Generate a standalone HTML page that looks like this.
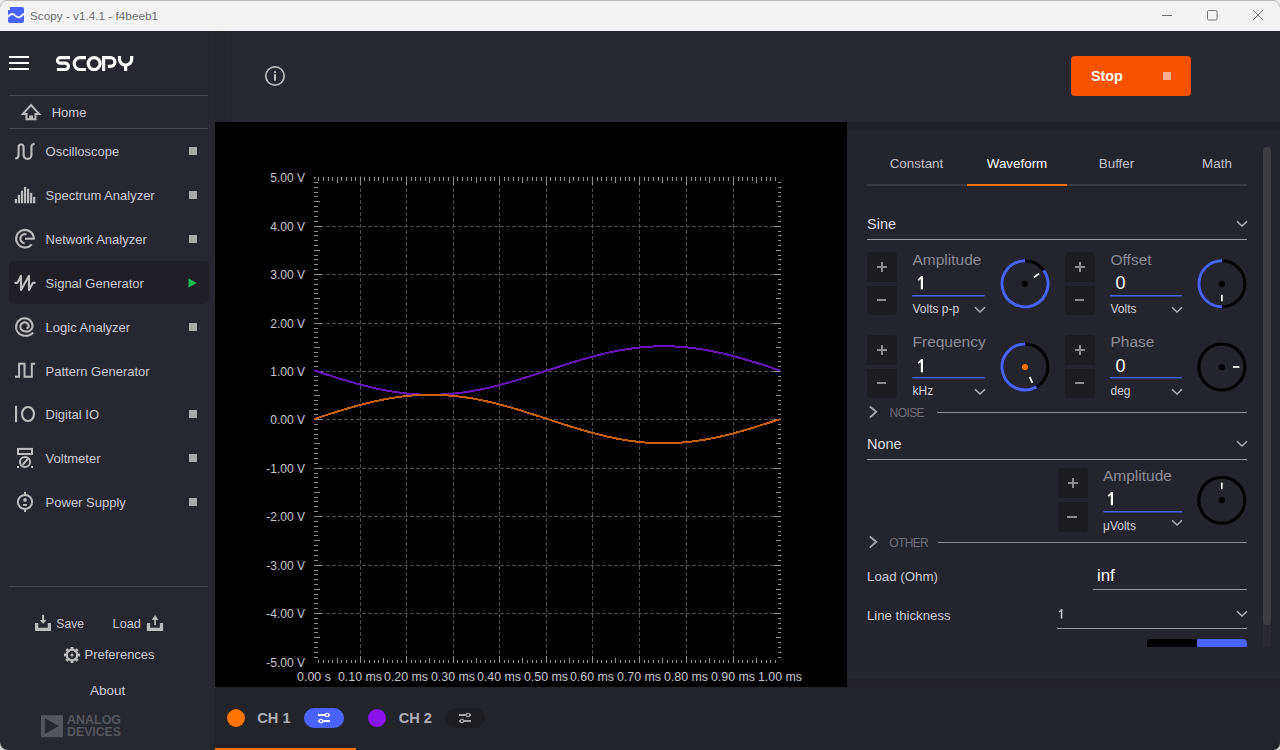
<!DOCTYPE html>
<html><head><meta charset="utf-8">
<style>
*{margin:0;padding:0;box-sizing:border-box}
html,body{width:1280px;height:750px;overflow:hidden;background:#272730;font-family:"Liberation Sans",sans-serif}
.a{position:absolute;white-space:nowrap}
svg.a{overflow:visible}
</style></head><body>
<div class="a" style="left:0px;top:0px;width:1280px;height:31px;background:#f3f3f3;"></div>
<div class="a" style="left:0px;top:0px;width:1280px;height:1px;background:#b9b9b9;"></div>
<svg class="a" style="left:8px;top:7px;" width="16" height="16" viewBox="0 0 16 16"><rect x="0" y="0" width="16" height="16" rx="2" fill="#4a62f7"/><path d="M0 9.8 C1.8 7.6 3.6 6.4 5.5 7.4 C7.2 8.3 8.8 10.6 11 10.4 C13 10.2 14.5 8 16 6.6" stroke="#fff" stroke-width="1.9" fill="none"/></svg>
<div class="a" style="left:30.00px;top:9.23px;width:400px;font-size:11.75px;line-height:14px;color:#6c6c6c;font-weight:400;text-align:left;">Scopy - v1.4.1 - f4beeb1</div>
<div class="a" style="left:1162px;top:15px;width:10px;height:1px;background:#6f6f6f;"></div>
<svg class="a" style="left:1206px;top:10px;" width="12" height="12" viewBox="0 0 12 12"><rect x="1.5" y="0.5" width="9.5" height="9.5" rx="1.2" stroke="#6f6f6f" stroke-width="1" fill="none"/></svg>
<svg class="a" style="left:1252px;top:9px;" width="12" height="12" viewBox="0 0 12 12"><path d="M1 1 L11 11 M11 1 L1 11" stroke="#6f6f6f" stroke-width="1" fill="none"/></svg>
<div class="a" style="left:0px;top:31px;width:215px;height:719px;background:#272730;"></div>
<div class="a" style="left:9px;top:56px;width:20px;height:2px;background:#ffffff;"></div>
<div class="a" style="left:9px;top:62px;width:20px;height:2px;background:#ffffff;"></div>
<div class="a" style="left:9px;top:68px;width:20px;height:2px;background:#ffffff;"></div>
<svg class="a" style="left:54px;top:52px;" width="82" height="23" viewBox="0 0 82 23"><g fill="none" stroke="#fff" stroke-width="3.2" stroke-linecap="butt"><path d="M16 5.6 H6.3 A2.8 2.8 0 0 0 6.3 11.2 H11.3 A3.15 3.15 0 0 1 11.3 17.5 H2.9"/><path d="M32 5.6 H26.15 A5.95 5.95 0 0 0 26.15 17.5 H32"/><circle cx="40.1" cy="11.55" r="5.95"/><path d="M49.6 19.1 V5.6 H56.5 A4.4 4.4 0 0 1 56.5 14.4 H53.8"/><path d="M65.5 4 V7 A6.1 6.1 0 0 0 77.7 7 V4 M71.6 13 V19.1"/></g></svg>
<div class="a" style="left:9px;top:95px;width:199px;height:1px;background:#45454d;"></div>
<div class="a" style="left:9px;top:128px;width:199px;height:1px;background:#45454d;"></div>
<svg class="a" style="left:20px;top:102px;" width="24" height="20" viewBox="0 0 24 20"><path d="M11 3.1 L2.9 11.9 H6.5 V17.2 H15.5 V11.9 H19.1 Z" fill="none" stroke="#bdbdbd" stroke-width="2" stroke-linejoin="miter" stroke-miterlimit="3"/><rect x="9.2" y="13.4" width="3.8" height="4" fill="#bdbdbd"/></svg>
<div class="a" style="left:51.70px;top:104.80px;width:400px;font-size:13px;line-height:16px;color:#c9cad0;font-weight:400;text-align:left;">Home</div>
<div class="a" style="left:9px;top:261px;width:200px;height:43px;background:#1f1f25;border-radius:5px;"></div>
<div class="a" style="left:45.60px;top:143.80px;width:400px;font-size:13px;line-height:16px;color:#c9cad0;font-weight:400;text-align:left;">Oscilloscope</div>
<div class="a" style="left:189px;top:147px;width:8px;height:8px;background:#a9a9a9;"></div>
<div class="a" style="left:45.60px;top:187.80px;width:400px;font-size:13px;line-height:16px;color:#c9cad0;font-weight:400;text-align:left;">Spectrum Analyzer</div>
<div class="a" style="left:189px;top:191px;width:8px;height:8px;background:#a9a9a9;"></div>
<div class="a" style="left:45.60px;top:231.80px;width:400px;font-size:13px;line-height:16px;color:#c9cad0;font-weight:400;text-align:left;">Network Analyzer</div>
<div class="a" style="left:189px;top:235px;width:8px;height:8px;background:#a9a9a9;"></div>
<div class="a" style="left:45.60px;top:275.80px;width:400px;font-size:13px;line-height:16px;color:#c9cad0;font-weight:400;text-align:left;">Signal Generator</div>
<svg class="a" style="left:188px;top:278px;" width="10" height="10" viewBox="0 0 10 10"><path d="M0.5 0.5 L9 5 L0.5 9.5 Z" fill="#1db954"/></svg>
<div class="a" style="left:45.60px;top:319.80px;width:400px;font-size:13px;line-height:16px;color:#c9cad0;font-weight:400;text-align:left;">Logic Analyzer</div>
<div class="a" style="left:189px;top:323px;width:8px;height:8px;background:#a9a9a9;"></div>
<div class="a" style="left:45.60px;top:363.80px;width:400px;font-size:13px;line-height:16px;color:#c9cad0;font-weight:400;text-align:left;">Pattern Generator</div>
<div class="a" style="left:45.60px;top:406.80px;width:400px;font-size:13px;line-height:16px;color:#c9cad0;font-weight:400;text-align:left;">Digital IO</div>
<div class="a" style="left:189px;top:410px;width:8px;height:8px;background:#a9a9a9;"></div>
<div class="a" style="left:45.60px;top:450.80px;width:400px;font-size:13px;line-height:16px;color:#c9cad0;font-weight:400;text-align:left;">Voltmeter</div>
<div class="a" style="left:189px;top:454px;width:8px;height:8px;background:#a9a9a9;"></div>
<div class="a" style="left:45.60px;top:494.80px;width:400px;font-size:13px;line-height:16px;color:#c9cad0;font-weight:400;text-align:left;">Power Supply</div>
<div class="a" style="left:189px;top:498px;width:8px;height:8px;background:#a9a9a9;"></div>
<svg class="a" style="left:10px;top:138px;" width="30" height="26" viewBox="0 0 30 26"><path d="M5.3 20.4 Q8.6 20.4 8.6 17 V9 A2.5 2.5 0 0 1 13.6 9 V17 A3.9 3.9 0 0 0 21.4 17 V9 Q21.4 6 24.6 6" fill="none" stroke="#bdbdbd" stroke-width="2.1"/></svg>
<svg class="a" style="left:10px;top:173px;" width="30" height="35" viewBox="0 0 30 35"><rect x="4.80" y="26.00" width="2.2" height="4.30" fill="#bdbdbd"/><rect x="7.85" y="21.80" width="2.2" height="8.50" fill="#bdbdbd"/><rect x="10.90" y="17.70" width="2.2" height="12.60" fill="#bdbdbd"/><rect x="13.95" y="13.90" width="2.2" height="16.40" fill="#bdbdbd"/><rect x="17.00" y="15.90" width="2.2" height="14.40" fill="#bdbdbd"/><rect x="20.05" y="19.80" width="2.2" height="10.50" fill="#bdbdbd"/><rect x="23.10" y="23.90" width="2.2" height="6.40" fill="#bdbdbd"/></svg>
<svg class="a" style="left:10px;top:226px;" width="30" height="26" viewBox="0 0 30 26"><g fill="none" stroke="#bdbdbd" stroke-width="2.1"><path d="M23.80 12.70 A8.8 8.8 0 1 0 21.74 18.36"/><path d="M15 12.7 H24.8"/><path d="M16.57 8.38 A4.6 4.6 0 1 0 14.60 17.28"/></g></svg>
<svg class="a" style="left:12px;top:272px;" width="26" height="24" viewBox="0 0 26 24"><path d="M3.3 10.9 H5.4 L9 3.8 V18 L17 3.8 V18 L20.8 10.9 H22.6" fill="none" stroke="#bdbdbd" stroke-width="2.1" stroke-linejoin="round" stroke-linecap="round"/></svg>
<svg class="a" style="left:10px;top:314px;" width="30" height="26" viewBox="0 0 30 26"><path d="M23.09 18.54 L22.80 18.85 L22.50 19.15 L22.19 19.43 L21.87 19.70 L21.53 19.95 L21.19 20.19 L20.84 20.41 L20.49 20.62 L20.12 20.81 L19.76 20.98 L19.38 21.14 L19.00 21.28 L18.62 21.40 L18.23 21.50 L17.85 21.59 L17.46 21.66 L17.07 21.71 L16.68 21.75 L16.29 21.77 L15.90 21.77 L15.52 21.76 L15.14 21.73 L14.76 21.70 L14.38 21.68 L14.00 21.65 L13.63 21.60 L13.26 21.53 L12.89 21.45 L12.53 21.35 L12.17 21.24 L11.81 21.11 L11.46 20.97 L11.12 20.81 L10.79 20.64 L10.46 20.46 L10.14 20.26 L9.83 20.05 L9.53 19.82 L9.24 19.58 L8.96 19.34 L8.69 19.07 L8.44 18.80 L8.19 18.52 L7.96 18.23 L7.74 17.93 L7.53 17.62 L7.33 17.30 L7.15 16.97 L6.99 16.64 L6.84 16.29 L6.70 15.95 L6.58 15.60 L6.47 15.24 L6.38 14.88 L6.30 14.51 L6.24 14.15 L6.19 13.78 L6.16 13.41 L6.15 13.04 L6.15 12.66 L6.17 12.29 L6.20 11.92 L6.25 11.56 L6.32 11.19 L6.40 10.83 L6.49 10.47 L6.60 10.12 L6.73 9.77 L6.87 9.43 L7.02 9.09 L7.19 8.76 L7.37 8.44 L7.57 8.13 L7.77 7.82 L7.99 7.53 L8.23 7.24 L8.47 6.97 L8.73 6.70 L9.00 6.45 L9.27 6.21 L9.56 5.98 L9.86 5.76 L10.16 5.56 L10.48 5.37 L10.80 5.19 L11.13 5.02 L11.46 4.88 L11.80 4.74 L12.15 4.62 L12.50 4.51 L12.85 4.42 L13.21 4.35 L13.57 4.29 L13.93 4.24 L14.30 4.21 L14.66 4.20 L15.03 4.21 L15.39 4.25 L15.75 4.31 L16.11 4.38 L16.46 4.46 L16.80 4.56 L17.14 4.68 L17.48 4.80 L17.81 4.95 L18.13 5.10 L18.44 5.27 L18.74 5.45 L19.04 5.64 L19.32 5.85 L19.60 6.06 L19.86 6.29 L20.12 6.53 L20.36 6.77 L20.59 7.03 L20.81 7.30 L21.02 7.57 L21.21 7.85 L21.40 8.14 L21.57 8.43 L21.72 8.73 L21.86 9.04 L21.99 9.35 L22.11 9.67 L22.21 9.98 L22.30 10.30 L22.37 10.63 L22.43 10.95 L22.48 11.28 L22.51 11.61 L22.52 11.93 L22.53 12.26 L22.51 12.58 L22.47 12.91 L22.37 13.22 L22.26 13.53 L22.14 13.83 L22.00 14.12 L21.86 14.40 L21.70 14.67 L21.53 14.93 L21.35 15.18 L21.17 15.42 L20.97 15.65 L20.77 15.86 L20.56 16.07 L20.34 16.26 L20.12 16.44 L19.89 16.60 L19.66 16.75 L19.42 16.89 L19.18 17.02 L18.94 17.14 L18.70 17.24 L18.45 17.33 L18.21 17.40 L17.96 17.47 L17.72 17.52 L17.47 17.56 L17.23 17.59 L16.99 17.60 L16.75 17.60 L16.52 17.60 L16.29 17.58 L16.07 17.55 L15.85 17.51 L15.63 17.46 L15.43 17.40 L15.22 17.33 L15.03 17.26 L14.84 17.20 L14.65 17.20 L14.47 17.18 L14.28 17.17 L14.10 17.14 L13.91 17.10 L13.73 17.06 L13.55 17.01 L13.37 16.95 L13.20 16.88 L13.02 16.81 L12.85 16.73 L12.69 16.64 L12.52 16.55 L12.37 16.44 L12.21 16.34 L12.06 16.22 L11.92 16.10 L11.78 15.97 L11.65 15.84 L11.52 15.70 L11.40 15.55 L11.28 15.40 L11.17 15.25 L11.07 15.09 L10.97 14.93 L10.88 14.76 L10.80 14.59 L10.72 14.41 L10.66 14.24 L10.60 14.06 L10.55 13.87 L10.50 13.69 L10.47 13.50 L10.44 13.31 L10.42 13.12 L10.40 12.93 L10.40 12.74 L10.41 12.55 L10.42 12.36 L10.44 12.17 L10.47 11.98 L10.51 11.80 L10.56 11.61 L10.61 11.43 L10.68 11.25 L10.75 11.07 L10.82 10.89 L10.91 10.72 L11.00 10.56 L11.10 10.39 L11.20 10.23 L11.32 10.08 L11.43 9.93 L11.56 9.78 L11.69 9.65 L11.83 9.51 L11.97 9.38 L12.12 9.26 L12.27 9.15 L12.43 9.04 L12.59 8.94 L12.75 8.84 L12.92 8.76 L13.10 8.68 L13.27 8.60 L13.45 8.54 L13.64 8.48 L13.82 8.43 L14.01 8.39 L14.19 8.36 L14.38 8.33 L14.57 8.31 L14.76 8.30 L14.96 8.31 L15.14 8.33 L15.33 8.37 L15.52 8.41 L15.70 8.47 L15.88 8.52 L16.05 8.59 L16.22 8.66 L16.39 8.74 L16.55 8.83 L16.71 8.92 L16.86 9.02 L17.01 9.13 L17.15 9.24 L17.29 9.36 L17.42 9.48 L17.54 9.60 L17.66 9.74 L17.78 9.87 L17.88 10.01 L17.98 10.15 L18.07 10.30 L18.16 10.45 L18.24 10.60 L18.31 10.76 L18.37 10.91 L18.43 11.07 L18.48 11.23 L18.53 11.39 L18.56 11.55 L18.59 11.72 L18.61 11.88 L18.63 12.04 L18.63 12.20 L18.63 12.37 L18.63 12.53 L18.61 12.69 L18.57 12.84 L18.48 12.99 L18.37 13.14 L18.26 13.27 L18.15 13.40 L18.03 13.51 L17.91 13.62 L17.78 13.72 L17.65 13.81 L17.52 13.89 L17.39 13.96 L17.26 14.02 L17.12 14.08 L16.99 14.12 L16.85 14.15 L16.72 14.18 L16.59 14.20 L16.46 14.21" fill="none" stroke="#bdbdbd" stroke-width="2.1"/></svg>
<svg class="a" style="left:10px;top:358px;" width="30" height="24" viewBox="0 0 30 24"><path d="M5 18.7 H9.1 V5.8 H14.5 V18.7 H21.8 V5.8 H25.2" fill="none" stroke="#bdbdbd" stroke-width="2"/></svg>
<svg class="a" style="left:12px;top:402px;" width="24" height="24" viewBox="0 0 24 24"><rect x="3" y="3.8" width="2.1" height="16.4" fill="#bdbdbd"/><ellipse cx="16" cy="12" rx="6" ry="7" fill="none" stroke="#bdbdbd" stroke-width="2.1"/></svg>
<svg class="a" style="left:12px;top:446px;" width="24" height="24" viewBox="0 0 24 24"><rect x="6" y="2.9" width="14" height="5.1" fill="none" stroke="#bdbdbd" stroke-width="2"/><circle cx="13" cy="16" r="5.1" fill="none" stroke="#bdbdbd" stroke-width="2"/><path d="M10.6 18.9 L16 12.6" stroke="#bdbdbd" stroke-width="2"/><rect x="5" y="20" width="2" height="2" fill="#bdbdbd"/><rect x="19" y="20" width="2" height="2" fill="#bdbdbd"/></svg>
<svg class="a" style="left:12px;top:490px;" width="24" height="24" viewBox="0 0 24 24"><circle cx="13" cy="12" r="7.1" fill="none" stroke="#bdbdbd" stroke-width="2"/><rect x="12" y="1.9" width="2" height="3" fill="#bdbdbd"/><rect x="12" y="19" width="2" height="3" fill="#bdbdbd"/><circle cx="13" cy="9.9" r="1.9" fill="#bdbdbd"/><rect x="11" y="14" width="4" height="1.8" fill="#bdbdbd"/></svg>
<div class="a" style="left:9px;top:586px;width:199px;height:1px;background:#45454d;"></div>
<svg class="a" style="left:34px;top:613px;" width="18" height="19" viewBox="0 0 18 19"><path d="M2.6 10 V16.4 H15.4 V10" fill="none" stroke="#bdbdbd" stroke-width="3.2"/><rect x="8.1" y="1.8" width="2" height="6" fill="#bdbdbd"/><path d="M5.8 7.1 L12.4 7.1 L9.1 11.1 Z" fill="#bdbdbd"/></svg>
<div class="a" style="left:56.30px;top:617.47px;width:400px;font-size:12.2px;line-height:15px;color:#c9cad0;font-weight:400;text-align:left;">Save</div>
<div class="a" style="left:112.60px;top:617.30px;width:400px;font-size:12.7px;line-height:15px;color:#c9cad0;font-weight:400;text-align:left;">Load</div>
<svg class="a" style="left:146px;top:613px;" width="18" height="19" viewBox="0 0 18 19"><path d="M2.5 10 V16.4 H15.5 V10" fill="none" stroke="#bdbdbd" stroke-width="3.2"/><rect x="8.2" y="6.5" width="1.7" height="5.5" fill="#bdbdbd"/><path d="M5.8 7.1 L12.4 7.1 L9.1 1.9 Z" fill="#bdbdbd"/></svg>
<svg class="a" style="left:64px;top:647px;" width="16" height="16" viewBox="0 0 16 16"><rect x="6.6" y="0" width="2.8" height="3.5" fill="#bdbdbd" transform="rotate(0 8 8)"/><rect x="6.6" y="0" width="2.8" height="3.5" fill="#bdbdbd" transform="rotate(45 8 8)"/><rect x="6.6" y="0" width="2.8" height="3.5" fill="#bdbdbd" transform="rotate(90 8 8)"/><rect x="6.6" y="0" width="2.8" height="3.5" fill="#bdbdbd" transform="rotate(135 8 8)"/><rect x="6.6" y="0" width="2.8" height="3.5" fill="#bdbdbd" transform="rotate(180 8 8)"/><rect x="6.6" y="0" width="2.8" height="3.5" fill="#bdbdbd" transform="rotate(225 8 8)"/><rect x="6.6" y="0" width="2.8" height="3.5" fill="#bdbdbd" transform="rotate(270 8 8)"/><rect x="6.6" y="0" width="2.8" height="3.5" fill="#bdbdbd" transform="rotate(315 8 8)"/><circle cx="8" cy="8" r="5.3" fill="none" stroke="#bdbdbd" stroke-width="2.2"/><circle cx="8" cy="8" r="1.5" fill="#bdbdbd"/></svg>
<div class="a" style="left:84.50px;top:647.20px;width:400px;font-size:13px;line-height:16px;color:#c9cad0;font-weight:400;text-align:left;">Preferences</div>
<div class="a" style="left:90.00px;top:683.32px;width:400px;font-size:13.5px;line-height:16px;color:#c9cad0;font-weight:400;text-align:left;">About</div>
<svg class="a" style="left:40px;top:714px;" width="84" height="24" viewBox="0 0 84 24"><rect x="1" y="1.2" width="22" height="22" fill="#55555c"/><path d="M4.8 4.3 L18.9 12 L4.8 19.9 Z" fill="#272730"/><g font-family="Liberation Sans" font-weight="700" font-size="13.6" fill="#55555c"><text x="27.1" y="10.4" textLength="53.9" lengthAdjust="spacingAndGlyphs">ANALOG</text><text x="27.1" y="22.2" textLength="53.9" lengthAdjust="spacingAndGlyphs">DEVICES</text></g></svg>
<div class="a" style="left:215px;top:31px;width:1065px;height:91px;background:#272730;"></div>
<div class="a" style="left:215px;top:31px;width:11px;height:91px;background:#25252c;"></div>
<svg class="a" style="left:264px;top:65px;" width="22" height="22" viewBox="0 0 22 22"><circle cx="11" cy="11" r="9.2" fill="none" stroke="#bdbdbd" stroke-width="1.7"/><rect x="10" y="9.2" width="2" height="6.5" fill="#bdbdbd"/><rect x="10" y="6.2" width="2" height="2" fill="#bdbdbd"/></svg>
<div class="a" style="left:1071px;top:56px;width:120px;height:40px;background:#f75200;border-radius:4px;"></div>
<div class="a" style="left:1090.90px;top:68.01px;width:400px;font-size:14.4px;line-height:17px;color:#ffffff;font-weight:700;text-align:left;">Stop</div>
<div class="a" style="left:1163px;top:72px;width:8px;height:8px;background:#f9b193;"></div>
<div class="a" style="left:215px;top:122px;width:632px;height:565px;background:#000;"></div>
<svg class="a" style="left:215px;top:122px;" width="632" height="565" viewBox="0 0 632 565"><g transform="translate(-215 -122)"><line x1="360.5" y1="176" x2="360.5" y2="663" stroke="#4b4b4b" stroke-width="1" stroke-dasharray="4 2"/><line x1="406.5" y1="176" x2="406.5" y2="663" stroke="#4b4b4b" stroke-width="1" stroke-dasharray="4 2"/><line x1="453.5" y1="176" x2="453.5" y2="663" stroke="#4b4b4b" stroke-width="1" stroke-dasharray="4 2"/><line x1="499.5" y1="176" x2="499.5" y2="663" stroke="#4b4b4b" stroke-width="1" stroke-dasharray="4 2"/><line x1="546.5" y1="176" x2="546.5" y2="663" stroke="#4b4b4b" stroke-width="1" stroke-dasharray="4 2"/><line x1="592.5" y1="176" x2="592.5" y2="663" stroke="#4b4b4b" stroke-width="1" stroke-dasharray="4 2"/><line x1="639.5" y1="176" x2="639.5" y2="663" stroke="#4b4b4b" stroke-width="1" stroke-dasharray="4 2"/><line x1="686.5" y1="176" x2="686.5" y2="663" stroke="#4b4b4b" stroke-width="1" stroke-dasharray="4 2"/><line x1="733.5" y1="176" x2="733.5" y2="663" stroke="#4b4b4b" stroke-width="1" stroke-dasharray="4 2"/><line x1="314" y1="226.5" x2="781" y2="226.5" stroke="#4b4b4b" stroke-width="1" stroke-dasharray="4 2"/><line x1="314" y1="274.5" x2="781" y2="274.5" stroke="#4b4b4b" stroke-width="1" stroke-dasharray="4 2"/><line x1="314" y1="323.5" x2="781" y2="323.5" stroke="#4b4b4b" stroke-width="1" stroke-dasharray="4 2"/><line x1="314" y1="371.5" x2="781" y2="371.5" stroke="#4b4b4b" stroke-width="1" stroke-dasharray="4 2"/><line x1="314" y1="419.5" x2="781" y2="419.5" stroke="#4b4b4b" stroke-width="1" stroke-dasharray="4 2"/><line x1="314" y1="468.5" x2="781" y2="468.5" stroke="#4b4b4b" stroke-width="1" stroke-dasharray="4 2"/><line x1="314" y1="516.5" x2="781" y2="516.5" stroke="#4b4b4b" stroke-width="1" stroke-dasharray="4 2"/><line x1="314" y1="565.5" x2="781" y2="565.5" stroke="#4b4b4b" stroke-width="1" stroke-dasharray="4 2"/><line x1="314" y1="613.5" x2="781" y2="613.5" stroke="#4b4b4b" stroke-width="1" stroke-dasharray="4 2"/><path d="M318.5 177V181M318.5 663V660M323.5 177V181M323.5 663V660M328.5 177V181M328.5 663V660M332.5 177V181M332.5 663V660M337.5 177V183M337.5 663V658M341.5 177V181M341.5 663V660M346.5 177V181M346.5 663V660M351.5 177V181M351.5 663V660M355.5 177V181M355.5 663V660M360.5 177V185M360.5 663V656M364.5 177V181M364.5 663V660M369.5 177V181M369.5 663V660M374.5 177V181M374.5 663V660M378.5 177V181M378.5 663V660M383.5 177V183M383.5 663V658M387.5 177V181M387.5 663V660M392.5 177V181M392.5 663V660M397.5 177V181M397.5 663V660M401.5 177V181M401.5 663V660M406.5 177V185M406.5 663V656M411.5 177V181M411.5 663V660M415.5 177V181M415.5 663V660M420.5 177V181M420.5 663V660M425.5 177V181M425.5 663V660M429.5 177V183M429.5 663V658M434.5 177V181M434.5 663V660M439.5 177V181M439.5 663V660M443.5 177V181M443.5 663V660M448.5 177V181M448.5 663V660M453.5 177V185M453.5 663V656M457.5 177V181M457.5 663V660M462.5 177V181M462.5 663V660M467.5 177V181M467.5 663V660M471.5 177V181M471.5 663V660M476.5 177V183M476.5 663V658M480.5 177V181M480.5 663V660M485.5 177V181M485.5 663V660M490.5 177V181M490.5 663V660M494.5 177V181M494.5 663V660M499.5 177V185M499.5 663V656M504.5 177V181M504.5 663V660M508.5 177V181M508.5 663V660M513.5 177V181M513.5 663V660M518.5 177V181M518.5 663V660M522.5 177V183M522.5 663V658M527.5 177V181M527.5 663V660M532.5 177V181M532.5 663V660M536.5 177V181M536.5 663V660M541.5 177V181M541.5 663V660M546.5 177V185M546.5 663V656M550.5 177V181M550.5 663V660M555.5 177V181M555.5 663V660M560.5 177V181M560.5 663V660M564.5 177V181M564.5 663V660M569.5 177V183M569.5 663V658M573.5 177V181M573.5 663V660M578.5 177V181M578.5 663V660M583.5 177V181M583.5 663V660M587.5 177V181M587.5 663V660M592.5 177V185M592.5 663V656M597.5 177V181M597.5 663V660M601.5 177V181M601.5 663V660M606.5 177V181M606.5 663V660M611.5 177V181M611.5 663V660M615.5 177V183M615.5 663V658M620.5 177V181M620.5 663V660M625.5 177V181M625.5 663V660M629.5 177V181M629.5 663V660M634.5 177V181M634.5 663V660M639.5 177V185M639.5 663V656M644.5 177V181M644.5 663V660M648.5 177V181M648.5 663V660M653.5 177V181M653.5 663V660M658.5 177V181M658.5 663V660M662.5 177V183M662.5 663V658M667.5 177V181M667.5 663V660M672.5 177V181M672.5 663V660M676.5 177V181M676.5 663V660M681.5 177V181M681.5 663V660M686.5 177V185M686.5 663V656M691.5 177V181M691.5 663V660M695.5 177V181M695.5 663V660M700.5 177V181M700.5 663V660M705.5 177V181M705.5 663V660M709.5 177V183M709.5 663V658M714.5 177V181M714.5 663V660M719.5 177V181M719.5 663V660M723.5 177V181M723.5 663V660M728.5 177V181M728.5 663V660M733.5 177V185M733.5 663V656M738.5 177V181M738.5 663V660M742.5 177V181M742.5 663V660M747.5 177V181M747.5 663V660M752.5 177V181M752.5 663V660M756.5 177V183M756.5 663V658M761.5 177V181M761.5 663V660M766.5 177V181M766.5 663V660M770.5 177V181M770.5 663V660M775.5 177V181M775.5 663V660M314 182.5H318M781 182.5H778M314 187.5H318M781 187.5H778M314 192.5H318M781 192.5H778M314 196.5H318M781 196.5H778M314 201.5H320M781 201.5H776M314 206.5H318M781 206.5H778M314 211.5H318M781 211.5H778M314 216.5H318M781 216.5H778M314 221.5H318M781 221.5H778M314 226.5H322M781 226.5H774M314 231.5H318M781 231.5H778M314 235.5H318M781 235.5H778M314 240.5H318M781 240.5H778M314 245.5H318M781 245.5H778M314 250.5H320M781 250.5H776M314 255.5H318M781 255.5H778M314 259.5H318M781 259.5H778M314 264.5H318M781 264.5H778M314 269.5H318M781 269.5H778M314 274.5H322M781 274.5H774M314 279.5H318M781 279.5H778M314 284.5H318M781 284.5H778M314 289.5H318M781 289.5H778M314 293.5H318M781 293.5H778M314 298.5H320M781 298.5H776M314 303.5H318M781 303.5H778M314 308.5H318M781 308.5H778M314 313.5H318M781 313.5H778M314 318.5H318M781 318.5H778M314 323.5H322M781 323.5H774M314 328.5H318M781 328.5H778M314 332.5H318M781 332.5H778M314 337.5H318M781 337.5H778M314 342.5H318M781 342.5H778M314 347.5H320M781 347.5H776M314 352.5H318M781 352.5H778M314 356.5H318M781 356.5H778M314 361.5H318M781 361.5H778M314 366.5H318M781 366.5H778M314 371.5H322M781 371.5H774M314 376.5H318M781 376.5H778M314 380.5H318M781 380.5H778M314 385.5H318M781 385.5H778M314 390.5H318M781 390.5H778M314 395.5H320M781 395.5H776M314 400.5H318M781 400.5H778M314 404.5H318M781 404.5H778M314 409.5H318M781 409.5H778M314 414.5H318M781 414.5H778M314 419.5H322M781 419.5H774M314 424.5H318M781 424.5H778M314 429.5H318M781 429.5H778M314 434.5H318M781 434.5H778M314 438.5H318M781 438.5H778M314 443.5H320M781 443.5H776M314 448.5H318M781 448.5H778M314 453.5H318M781 453.5H778M314 458.5H318M781 458.5H778M314 463.5H318M781 463.5H778M314 468.5H322M781 468.5H774M314 473.5H318M781 473.5H778M314 477.5H318M781 477.5H778M314 482.5H318M781 482.5H778M314 487.5H318M781 487.5H778M314 492.5H320M781 492.5H776M314 497.5H318M781 497.5H778M314 501.5H318M781 501.5H778M314 506.5H318M781 506.5H778M314 511.5H318M781 511.5H778M314 516.5H322M781 516.5H774M314 521.5H318M781 521.5H778M314 526.5H318M781 526.5H778M314 531.5H318M781 531.5H778M314 535.5H318M781 535.5H778M314 540.5H320M781 540.5H776M314 545.5H318M781 545.5H778M314 550.5H318M781 550.5H778M314 555.5H318M781 555.5H778M314 560.5H318M781 560.5H778M314 565.5H322M781 565.5H774M314 570.5H318M781 570.5H778M314 574.5H318M781 574.5H778M314 579.5H318M781 579.5H778M314 584.5H318M781 584.5H778M314 589.5H320M781 589.5H776M314 594.5H318M781 594.5H778M314 598.5H318M781 598.5H778M314 603.5H318M781 603.5H778M314 608.5H318M781 608.5H778M314 613.5H322M781 613.5H774M314 618.5H318M781 618.5H778M314 623.5H318M781 623.5H778M314 628.5H318M781 628.5H778M314 632.5H318M781 632.5H778M314 637.5H320M781 637.5H776M314 642.5H318M781 642.5H778M314 647.5H318M781 647.5H778M314 652.5H318M781 652.5H778M314 657.5H318M781 657.5H778M314 177.5H316M314.5 177V179" stroke="#8f8f8f" stroke-width="1" fill="none"/><polyline points="314.30 370.50 315.30 370.83 316.30 371.16 317.31 371.48 318.31 371.81 319.31 372.14 320.31 372.46 321.32 372.79 322.32 373.12 323.32 373.44 324.32 373.77 325.32 374.09 326.33 374.41 327.33 374.74 328.33 375.06 329.33 375.38 330.33 375.70 331.34 376.02 332.34 376.34 333.34 376.66 334.34 376.97 335.35 377.29 336.35 377.60 337.35 377.92 338.35 378.23 339.35 378.54 340.36 378.85 341.36 379.15 342.36 379.46 343.36 379.76 344.36 380.06 345.37 380.36 346.37 380.66 347.37 380.96 348.37 381.25 349.38 381.55 350.38 381.84 351.38 382.13 352.38 382.41 353.38 382.70 354.39 382.98 355.39 383.26 356.39 383.54 357.39 383.81 358.39 384.08 359.40 384.35 360.40 384.62 361.40 384.89 362.40 385.15 363.41 385.41 364.41 385.67 365.41 385.92 366.41 386.17 367.41 386.42 368.42 386.67 369.42 386.91 370.42 387.15 371.42 387.38 372.42 387.62 373.43 387.85 374.43 388.08 375.43 388.30 376.43 388.52 377.44 388.74 378.44 388.95 379.44 389.16 380.44 389.37 381.44 389.58 382.45 389.78 383.45 389.97 384.45 390.17 385.45 390.36 386.45 390.54 387.46 390.73 388.46 390.90 389.46 391.08 390.46 391.25 391.47 391.42 392.47 391.58 393.47 391.74 394.47 391.90 395.47 392.05 396.48 392.20 397.48 392.34 398.48 392.48 399.48 392.62 400.48 392.75 401.49 392.88 402.49 393.00 403.49 393.12 404.49 393.24 405.50 393.35 406.50 393.46 407.50 393.56 408.50 393.66 409.50 393.76 410.51 393.85 411.51 393.93 412.51 394.02 413.51 394.09 414.52 394.17 415.52 394.24 416.52 394.30 417.52 394.36 418.52 394.42 419.53 394.47 420.53 394.52 421.53 394.56 422.53 394.60 423.53 394.63 424.54 394.66 425.54 394.69 426.54 394.71 427.54 394.73 428.55 394.74 429.55 394.75 430.55 394.75 431.55 394.75 432.55 394.74 433.56 394.73 434.56 394.72 435.56 394.70 436.56 394.68 437.56 394.65 438.57 394.62 439.57 394.58 440.57 394.54 441.57 394.49 442.58 394.45 443.58 394.39 444.58 394.33 445.58 394.27 446.58 394.20 447.59 394.13 448.59 394.06 449.59 393.98 450.59 393.89 451.59 393.80 452.60 393.71 453.60 393.61 454.60 393.51 455.60 393.41 456.61 393.30 457.61 393.18 458.61 393.07 459.61 392.94 460.61 392.82 461.62 392.69 462.62 392.55 463.62 392.41 464.62 392.27 465.62 392.13 466.63 391.98 467.63 391.82 468.63 391.66 469.63 391.50 470.64 391.34 471.64 391.17 472.64 390.99 473.64 390.82 474.64 390.63 475.65 390.45 476.65 390.26 477.65 390.07 478.65 389.88 479.65 389.68 480.66 389.47 481.66 389.27 482.66 389.06 483.66 388.85 484.67 388.63 485.67 388.41 486.67 388.19 487.67 387.96 488.67 387.73 489.68 387.50 490.68 387.27 491.68 387.03 492.68 386.79 493.68 386.54 494.69 386.30 495.69 386.05 496.69 385.79 497.69 385.54 498.70 385.28 499.70 385.02 500.70 384.75 501.70 384.49 502.70 384.22 503.71 383.95 504.71 383.67 505.71 383.40 506.71 383.12 507.72 382.84 508.72 382.55 509.72 382.27 510.72 381.98 511.72 381.69 512.73 381.40 513.73 381.11 514.73 380.81 515.73 380.51 516.73 380.21 517.74 379.91 518.74 379.61 519.74 379.31 520.74 379.00 521.75 378.69 522.75 378.38 523.75 378.07 524.75 377.76 525.75 377.45 526.76 377.13 527.76 376.82 528.76 376.50 529.76 376.18 530.76 375.86 531.77 375.54 532.77 375.22 533.77 374.90 534.77 374.58 535.78 374.25 536.78 373.93 537.78 373.60 538.78 373.28 539.78 372.95 540.79 372.63 541.79 372.30 542.79 371.97 543.79 371.65 544.79 371.32 545.80 370.99 546.80 370.66 547.80 370.34 548.80 370.01 549.81 369.68 550.81 369.35 551.81 369.03 552.81 368.70 553.81 368.37 554.82 368.05 555.82 367.72 556.82 367.40 557.82 367.07 558.82 366.75 559.83 366.42 560.83 366.10 561.83 365.78 562.83 365.46 563.84 365.14 564.84 364.82 565.84 364.50 566.84 364.18 567.84 363.87 568.85 363.55 569.85 363.24 570.85 362.93 571.85 362.62 572.85 362.31 573.86 362.00 574.86 361.69 575.86 361.39 576.86 361.09 577.87 360.79 578.87 360.49 579.87 360.19 580.87 359.89 581.87 359.60 582.88 359.31 583.88 359.02 584.88 358.73 585.88 358.45 586.88 358.16 587.89 357.88 588.89 357.60 589.89 357.33 590.89 357.05 591.90 356.78 592.90 356.51 593.90 356.25 594.90 355.98 595.90 355.72 596.91 355.46 597.91 355.21 598.91 354.95 599.91 354.70 600.92 354.46 601.92 354.21 602.92 353.97 603.92 353.73 604.92 353.50 605.93 353.27 606.93 353.04 607.93 352.81 608.93 352.59 609.93 352.37 610.94 352.15 611.94 351.94 612.94 351.73 613.94 351.53 614.95 351.32 615.95 351.12 616.95 350.93 617.95 350.74 618.95 350.55 619.96 350.37 620.96 350.18 621.96 350.01 622.96 349.83 623.96 349.66 624.97 349.50 625.97 349.34 626.97 349.18 627.97 349.02 628.98 348.87 629.98 348.73 630.98 348.59 631.98 348.45 632.98 348.31 633.99 348.18 634.99 348.06 635.99 347.93 636.99 347.82 637.99 347.70 639.00 347.59 640.00 347.49 641.00 347.39 642.00 347.29 643.01 347.20 644.01 347.11 645.01 347.02 646.01 346.94 647.01 346.87 648.02 346.80 649.02 346.73 650.02 346.67 651.02 346.61 652.02 346.55 653.03 346.51 654.03 346.46 655.03 346.42 656.03 346.38 657.04 346.35 658.04 346.32 659.04 346.30 660.04 346.28 661.04 346.27 662.05 346.26 663.05 346.25 664.05 346.25 665.05 346.25 666.05 346.26 667.06 346.27 668.06 346.29 669.06 346.31 670.06 346.34 671.07 346.37 672.07 346.40 673.07 346.44 674.07 346.48 675.07 346.53 676.08 346.58 677.08 346.64 678.08 346.70 679.08 346.76 680.08 346.83 681.09 346.91 682.09 346.98 683.09 347.07 684.09 347.15 685.10 347.24 686.10 347.34 687.10 347.44 688.10 347.54 689.10 347.65 690.11 347.76 691.11 347.88 692.11 348.00 693.11 348.12 694.12 348.25 695.12 348.38 696.12 348.52 697.12 348.66 698.12 348.80 699.13 348.95 700.13 349.10 701.13 349.26 702.13 349.42 703.13 349.58 704.14 349.75 705.14 349.92 706.14 350.10 707.14 350.27 708.15 350.46 709.15 350.64 710.15 350.83 711.15 351.03 712.15 351.22 713.16 351.42 714.16 351.63 715.16 351.84 716.16 352.05 717.16 352.26 718.17 352.48 719.17 352.70 720.17 352.92 721.17 353.15 722.18 353.38 723.18 353.62 724.18 353.85 725.18 354.09 726.18 354.33 727.19 354.58 728.19 354.83 729.19 355.08 730.19 355.33 731.19 355.59 732.20 355.85 733.20 356.11 734.20 356.38 735.20 356.65 736.21 356.92 737.21 357.19 738.21 357.46 739.21 357.74 740.21 358.02 741.22 358.30 742.22 358.59 743.22 358.87 744.22 359.16 745.22 359.45 746.23 359.75 747.23 360.04 748.23 360.34 749.23 360.64 750.24 360.94 751.24 361.24 752.24 361.54 753.24 361.85 754.24 362.15 755.25 362.46 756.25 362.77 757.25 363.08 758.25 363.40 759.25 363.71 760.26 364.03 761.26 364.34 762.26 364.66 763.26 364.98 764.27 365.30 765.27 365.62 766.27 365.94 767.27 366.26 768.27 366.59 769.28 366.91 770.28 367.23 771.28 367.56 772.28 367.88 773.28 368.21 774.29 368.54 775.29 368.86 776.29 369.19 777.29 369.52 778.30 369.84 779.30 370.17 780.30 370.50" fill="none" stroke="#6a14bc" stroke-width="2" shape-rendering="crispEdges"/><polyline points="314.30 419.00 315.30 418.67 316.30 418.34 317.31 418.02 318.31 417.69 319.31 417.36 320.31 417.04 321.32 416.71 322.32 416.38 323.32 416.06 324.32 415.73 325.32 415.41 326.33 415.09 327.33 414.76 328.33 414.44 329.33 414.12 330.33 413.80 331.34 413.48 332.34 413.16 333.34 412.84 334.34 412.53 335.35 412.21 336.35 411.90 337.35 411.58 338.35 411.27 339.35 410.96 340.36 410.65 341.36 410.35 342.36 410.04 343.36 409.74 344.36 409.44 345.37 409.14 346.37 408.84 347.37 408.54 348.37 408.25 349.38 407.95 350.38 407.66 351.38 407.37 352.38 407.09 353.38 406.80 354.39 406.52 355.39 406.24 356.39 405.96 357.39 405.69 358.39 405.42 359.40 405.15 360.40 404.88 361.40 404.61 362.40 404.35 363.41 404.09 364.41 403.83 365.41 403.58 366.41 403.33 367.41 403.08 368.42 402.83 369.42 402.59 370.42 402.35 371.42 402.12 372.42 401.88 373.43 401.65 374.43 401.42 375.43 401.20 376.43 400.98 377.44 400.76 378.44 400.55 379.44 400.34 380.44 400.13 381.44 399.92 382.45 399.72 383.45 399.53 384.45 399.33 385.45 399.14 386.45 398.96 387.46 398.77 388.46 398.60 389.46 398.42 390.46 398.25 391.47 398.08 392.47 397.92 393.47 397.76 394.47 397.60 395.47 397.45 396.48 397.30 397.48 397.16 398.48 397.02 399.48 396.88 400.48 396.75 401.49 396.62 402.49 396.50 403.49 396.38 404.49 396.26 405.50 396.15 406.50 396.04 407.50 395.94 408.50 395.84 409.50 395.74 410.51 395.65 411.51 395.57 412.51 395.48 413.51 395.41 414.52 395.33 415.52 395.26 416.52 395.20 417.52 395.14 418.52 395.08 419.53 395.03 420.53 394.98 421.53 394.94 422.53 394.90 423.53 394.87 424.54 394.84 425.54 394.81 426.54 394.79 427.54 394.77 428.55 394.76 429.55 394.75 430.55 394.75 431.55 394.75 432.55 394.76 433.56 394.77 434.56 394.78 435.56 394.80 436.56 394.82 437.56 394.85 438.57 394.88 439.57 394.92 440.57 394.96 441.57 395.01 442.58 395.05 443.58 395.11 444.58 395.17 445.58 395.23 446.58 395.30 447.59 395.37 448.59 395.44 449.59 395.52 450.59 395.61 451.59 395.70 452.60 395.79 453.60 395.89 454.60 395.99 455.60 396.09 456.61 396.20 457.61 396.32 458.61 396.43 459.61 396.56 460.61 396.68 461.62 396.81 462.62 396.95 463.62 397.09 464.62 397.23 465.62 397.37 466.63 397.52 467.63 397.68 468.63 397.84 469.63 398.00 470.64 398.16 471.64 398.33 472.64 398.51 473.64 398.68 474.64 398.87 475.65 399.05 476.65 399.24 477.65 399.43 478.65 399.62 479.65 399.82 480.66 400.03 481.66 400.23 482.66 400.44 483.66 400.65 484.67 400.87 485.67 401.09 486.67 401.31 487.67 401.54 488.67 401.77 489.68 402.00 490.68 402.23 491.68 402.47 492.68 402.71 493.68 402.96 494.69 403.20 495.69 403.45 496.69 403.71 497.69 403.96 498.70 404.22 499.70 404.48 500.70 404.75 501.70 405.01 502.70 405.28 503.71 405.55 504.71 405.83 505.71 406.10 506.71 406.38 507.72 406.66 508.72 406.95 509.72 407.23 510.72 407.52 511.72 407.81 512.73 408.10 513.73 408.39 514.73 408.69 515.73 408.99 516.73 409.29 517.74 409.59 518.74 409.89 519.74 410.19 520.74 410.50 521.75 410.81 522.75 411.12 523.75 411.43 524.75 411.74 525.75 412.05 526.76 412.37 527.76 412.68 528.76 413.00 529.76 413.32 530.76 413.64 531.77 413.96 532.77 414.28 533.77 414.60 534.77 414.92 535.78 415.25 536.78 415.57 537.78 415.90 538.78 416.22 539.78 416.55 540.79 416.87 541.79 417.20 542.79 417.53 543.79 417.85 544.79 418.18 545.80 418.51 546.80 418.84 547.80 419.16 548.80 419.49 549.81 419.82 550.81 420.15 551.81 420.47 552.81 420.80 553.81 421.13 554.82 421.45 555.82 421.78 556.82 422.10 557.82 422.43 558.82 422.75 559.83 423.08 560.83 423.40 561.83 423.72 562.83 424.04 563.84 424.36 564.84 424.68 565.84 425.00 566.84 425.32 567.84 425.63 568.85 425.95 569.85 426.26 570.85 426.57 571.85 426.88 572.85 427.19 573.86 427.50 574.86 427.81 575.86 428.11 576.86 428.41 577.87 428.71 578.87 429.01 579.87 429.31 580.87 429.61 581.87 429.90 582.88 430.19 583.88 430.48 584.88 430.77 585.88 431.05 586.88 431.34 587.89 431.62 588.89 431.90 589.89 432.17 590.89 432.45 591.90 432.72 592.90 432.99 593.90 433.25 594.90 433.52 595.90 433.78 596.91 434.04 597.91 434.29 598.91 434.55 599.91 434.80 600.92 435.04 601.92 435.29 602.92 435.53 603.92 435.77 604.92 436.00 605.93 436.23 606.93 436.46 607.93 436.69 608.93 436.91 609.93 437.13 610.94 437.35 611.94 437.56 612.94 437.77 613.94 437.97 614.95 438.18 615.95 438.38 616.95 438.57 617.95 438.76 618.95 438.95 619.96 439.13 620.96 439.32 621.96 439.49 622.96 439.67 623.96 439.84 624.97 440.00 625.97 440.16 626.97 440.32 627.97 440.48 628.98 440.63 629.98 440.77 630.98 440.91 631.98 441.05 632.98 441.19 633.99 441.32 634.99 441.44 635.99 441.57 636.99 441.68 637.99 441.80 639.00 441.91 640.00 442.01 641.00 442.11 642.00 442.21 643.01 442.30 644.01 442.39 645.01 442.48 646.01 442.56 647.01 442.63 648.02 442.70 649.02 442.77 650.02 442.83 651.02 442.89 652.02 442.95 653.03 442.99 654.03 443.04 655.03 443.08 656.03 443.12 657.04 443.15 658.04 443.18 659.04 443.20 660.04 443.22 661.04 443.23 662.05 443.24 663.05 443.25 664.05 443.25 665.05 443.25 666.05 443.24 667.06 443.23 668.06 443.21 669.06 443.19 670.06 443.16 671.07 443.13 672.07 443.10 673.07 443.06 674.07 443.02 675.07 442.97 676.08 442.92 677.08 442.86 678.08 442.80 679.08 442.74 680.08 442.67 681.09 442.59 682.09 442.52 683.09 442.43 684.09 442.35 685.10 442.26 686.10 442.16 687.10 442.06 688.10 441.96 689.10 441.85 690.11 441.74 691.11 441.62 692.11 441.50 693.11 441.38 694.12 441.25 695.12 441.12 696.12 440.98 697.12 440.84 698.12 440.70 699.13 440.55 700.13 440.40 701.13 440.24 702.13 440.08 703.13 439.92 704.14 439.75 705.14 439.58 706.14 439.40 707.14 439.23 708.15 439.04 709.15 438.86 710.15 438.67 711.15 438.47 712.15 438.28 713.16 438.08 714.16 437.87 715.16 437.66 716.16 437.45 717.16 437.24 718.17 437.02 719.17 436.80 720.17 436.58 721.17 436.35 722.18 436.12 723.18 435.88 724.18 435.65 725.18 435.41 726.18 435.17 727.19 434.92 728.19 434.67 729.19 434.42 730.19 434.17 731.19 433.91 732.20 433.65 733.20 433.39 734.20 433.12 735.20 432.85 736.21 432.58 737.21 432.31 738.21 432.04 739.21 431.76 740.21 431.48 741.22 431.20 742.22 430.91 743.22 430.63 744.22 430.34 745.22 430.05 746.23 429.75 747.23 429.46 748.23 429.16 749.23 428.86 750.24 428.56 751.24 428.26 752.24 427.96 753.24 427.65 754.24 427.35 755.25 427.04 756.25 426.73 757.25 426.42 758.25 426.10 759.25 425.79 760.26 425.47 761.26 425.16 762.26 424.84 763.26 424.52 764.27 424.20 765.27 423.88 766.27 423.56 767.27 423.24 768.27 422.91 769.28 422.59 770.28 422.27 771.28 421.94 772.28 421.62 773.28 421.29 774.29 420.96 775.29 420.64 776.29 420.31 777.29 419.98 778.30 419.66 779.30 419.33 780.30 419.00" fill="none" stroke="#c85e0c" stroke-width="2" shape-rendering="crispEdges"/></g></svg>
<div class="a" style="left:225.00px;top:170.84px;width:80px;font-size:12px;line-height:14px;color:#c8c8d0;font-weight:400;text-align:right;">5.00 V</div>
<div class="a" style="left:225.00px;top:219.84px;width:80px;font-size:12px;line-height:14px;color:#c8c8d0;font-weight:400;text-align:right;">4.00 V</div>
<div class="a" style="left:225.00px;top:267.84px;width:80px;font-size:12px;line-height:14px;color:#c8c8d0;font-weight:400;text-align:right;">3.00 V</div>
<div class="a" style="left:225.00px;top:316.84px;width:80px;font-size:12px;line-height:14px;color:#c8c8d0;font-weight:400;text-align:right;">2.00 V</div>
<div class="a" style="left:225.00px;top:364.84px;width:80px;font-size:12px;line-height:14px;color:#c8c8d0;font-weight:400;text-align:right;">1.00 V</div>
<div class="a" style="left:225.00px;top:412.84px;width:80px;font-size:12px;line-height:14px;color:#c8c8d0;font-weight:400;text-align:right;">0.00 V</div>
<div class="a" style="left:225.00px;top:461.84px;width:80px;font-size:12px;line-height:14px;color:#c8c8d0;font-weight:400;text-align:right;">-1.00 V</div>
<div class="a" style="left:225.00px;top:509.84px;width:80px;font-size:12px;line-height:14px;color:#c8c8d0;font-weight:400;text-align:right;">-2.00 V</div>
<div class="a" style="left:225.00px;top:558.84px;width:80px;font-size:12px;line-height:14px;color:#c8c8d0;font-weight:400;text-align:right;">-3.00 V</div>
<div class="a" style="left:225.00px;top:606.84px;width:80px;font-size:12px;line-height:14px;color:#c8c8d0;font-weight:400;text-align:right;">-4.00 V</div>
<div class="a" style="left:225.00px;top:655.84px;width:80px;font-size:12px;line-height:14px;color:#c8c8d0;font-weight:400;text-align:right;">-5.00 V</div>
<div class="a" style="left:274.00px;top:669.90px;width:80px;font-size:12.4px;line-height:15px;color:#c8c8d0;font-weight:400;text-align:center;">0.00 s</div>
<div class="a" style="left:320.00px;top:669.90px;width:80px;font-size:12.4px;line-height:15px;color:#c8c8d0;font-weight:400;text-align:center;">0.10 ms</div>
<div class="a" style="left:366.00px;top:669.90px;width:80px;font-size:12.4px;line-height:15px;color:#c8c8d0;font-weight:400;text-align:center;">0.20 ms</div>
<div class="a" style="left:413.00px;top:669.90px;width:80px;font-size:12.4px;line-height:15px;color:#c8c8d0;font-weight:400;text-align:center;">0.30 ms</div>
<div class="a" style="left:459.00px;top:669.90px;width:80px;font-size:12.4px;line-height:15px;color:#c8c8d0;font-weight:400;text-align:center;">0.40 ms</div>
<div class="a" style="left:506.00px;top:669.90px;width:80px;font-size:12.4px;line-height:15px;color:#c8c8d0;font-weight:400;text-align:center;">0.50 ms</div>
<div class="a" style="left:552.00px;top:669.90px;width:80px;font-size:12.4px;line-height:15px;color:#c8c8d0;font-weight:400;text-align:center;">0.60 ms</div>
<div class="a" style="left:599.00px;top:669.90px;width:80px;font-size:12.4px;line-height:15px;color:#c8c8d0;font-weight:400;text-align:center;">0.70 ms</div>
<div class="a" style="left:646.00px;top:669.90px;width:80px;font-size:12.4px;line-height:15px;color:#c8c8d0;font-weight:400;text-align:center;">0.80 ms</div>
<div class="a" style="left:693.00px;top:669.90px;width:80px;font-size:12.4px;line-height:15px;color:#c8c8d0;font-weight:400;text-align:center;">0.90 ms</div>
<div class="a" style="left:740.00px;top:669.90px;width:80px;font-size:12.4px;line-height:15px;color:#c8c8d0;font-weight:400;text-align:center;">1.00 ms</div>
<div class="a" style="left:847px;top:122px;width:433px;height:565px;background:#24242c;"></div>
<div class="a" style="left:847px;top:122px;width:433px;height:9px;background:#212128;"></div>
<div class="a" style="left:847px;top:679px;width:433px;height:8px;background:#212127;"></div>
<div class="a" style="left:866.50px;top:156.26px;width:100px;font-size:13.4px;line-height:16px;color:#c0c1c8;font-weight:400;text-align:center;">Constant</div>
<div class="a" style="left:967.00px;top:156.26px;width:100px;font-size:13.4px;line-height:16px;color:#ffffff;font-weight:400;text-align:center;">Waveform</div>
<div class="a" style="left:1066.50px;top:156.26px;width:100px;font-size:13.4px;line-height:16px;color:#c0c1c8;font-weight:400;text-align:center;">Buffer</div>
<div class="a" style="left:1167.00px;top:156.26px;width:100px;font-size:13.4px;line-height:16px;color:#c0c1c8;font-weight:400;text-align:center;">Math</div>
<div class="a" style="left:867px;top:184px;width:380px;height:2px;background:#3a3a44;"></div>
<div class="a" style="left:967px;top:184px;width:100px;height:2px;background:#ff7200;"></div>
<div class="a" style="left:1263px;top:600px;width:8px;height:47px;background:#2a2a30;"></div>
<div class="a" style="left:1263px;top:147px;width:8px;height:478px;background:#3d3d42;border-radius:4px;"></div>
<div class="a" style="left:867.00px;top:215.98px;width:400px;font-size:14.5px;line-height:17px;color:#dedee2;font-weight:400;text-align:left;">Sine</div>
<div class="a" style="left:867px;top:239px;width:380px;height:1px;background:#9a9aa0;"></div>
<svg class="a" style="left:1236px;top:220px;" width="12" height="8" viewBox="0 0 12 8"><path d="M1 1.2 L6 6 L11 1.2" fill="none" stroke="#b0b0b8" stroke-width="1.5"/></svg>
<svg class="a" style="left:847px;top:122px;" width="433" height="565" viewBox="0 0 433 565"><g transform="translate(-847 -122)"><circle cx="1025" cy="283.8" r="23" fill="none" stroke="#000" stroke-width="3"/><path d="M1043.61 270.28 A23 23 0 1 1 1025.00 260.80" fill="none" stroke="#4a63ff" stroke-width="3"/><line x1="1033.90" y1="277.33" x2="1039.16" y2="273.51" stroke="#fff" stroke-width="1.7"/><circle cx="1025" cy="283.8" r="3.1" fill="#000"/><circle cx="1221.9" cy="283.8" r="23" fill="none" stroke="#000" stroke-width="3"/><path d="M1221.90 306.80 A23 23 0 0 1 1221.90 260.80" fill="none" stroke="#4a63ff" stroke-width="3"/><line x1="1221.90" y1="294.80" x2="1221.90" y2="301.30" stroke="#fff" stroke-width="1.7"/><circle cx="1221.9" cy="283.8" r="3.1" fill="#000"/><circle cx="1025" cy="367" r="23" fill="none" stroke="#000" stroke-width="3"/><path d="M1036.50 386.92 A23 23 0 1 1 1025.00 344.00" fill="none" stroke="#4a63ff" stroke-width="3"/><line x1="1029.65" y1="376.97" x2="1032.40" y2="382.86" stroke="#fff" stroke-width="1.7"/><circle cx="1025" cy="367" r="3.1" fill="#ff7200"/><circle cx="1221.9" cy="367" r="23" fill="none" stroke="#000" stroke-width="3"/><line x1="1232.90" y1="367.00" x2="1239.40" y2="367.00" stroke="#fff" stroke-width="1.7"/><circle cx="1221.9" cy="367" r="3.1" fill="#000"/><circle cx="1221.8" cy="500.2" r="23" fill="none" stroke="#000" stroke-width="3"/><line x1="1221.80" y1="489.20" x2="1221.80" y2="482.70" stroke="#fff" stroke-width="1.7"/><circle cx="1221.8" cy="500.2" r="3.1" fill="#000"/></g></svg>
<div class="a" style="left:867px;top:252px;width:30px;height:30px;background:#1c1c21;border-radius:4px 4px 0 0;"></div>
<div class="a" style="left:867px;top:286px;width:30px;height:29px;background:#1c1c21;border-radius:0 0 4px 4px;"></div>
<div class="a" style="left:877px;top:266px;width:10px;height:2px;background:#8c8c92;"></div>
<div class="a" style="left:881px;top:262px;width:2px;height:10px;background:#8c8c92;"></div>
<div class="a" style="left:877px;top:299px;width:9px;height:2px;background:#8c8c92;"></div>
<div class="a" style="left:912.50px;top:250.33px;width:400px;font-size:15.5px;line-height:19px;color:#8b8b93;font-weight:400;text-align:left;">Amplitude</div>
<svg class="a" style="left:916.5px;top:274.7px;" width="9" height="15.3" viewBox="0 0 9 15.3"><rect x="3.8" y="1" width="2.2" height="13.3" fill="#ffffff"/><path d="M1.2 5.1 L5.2 1.8" stroke="#ffffff" stroke-width="1.8"/></svg>
<svg class="a" style="left:912.0px;top:294.6px;" width="73.0" height="1.4" viewBox="0 0 73.0 1.4"><rect x="0" y="0" width="73.0" height="1.4" fill="#4a63ff"/></svg>
<div class="a" style="left:912.50px;top:301.84px;width:400px;font-size:12px;line-height:14px;color:#d0d0d6;font-weight:400;text-align:left;">Volts p-p</div>
<svg class="a" style="left:974px;top:305.5px;" width="12" height="8" viewBox="0 0 12 8"><path d="M1 1.2 L6 6 L11 1.2" fill="none" stroke="#b0b0b8" stroke-width="1.5"/></svg>
<div class="a" style="left:1065px;top:252px;width:30px;height:30px;background:#1c1c21;border-radius:4px 4px 0 0;"></div>
<div class="a" style="left:1065px;top:286px;width:30px;height:29px;background:#1c1c21;border-radius:0 0 4px 4px;"></div>
<div class="a" style="left:1075px;top:266px;width:10px;height:2px;background:#8c8c92;"></div>
<div class="a" style="left:1079px;top:262px;width:2px;height:10px;background:#8c8c92;"></div>
<div class="a" style="left:1075px;top:299px;width:9px;height:2px;background:#8c8c92;"></div>
<div class="a" style="left:1110.50px;top:250.33px;width:400px;font-size:15.5px;line-height:19px;color:#8b8b93;font-weight:400;text-align:left;">Offset</div>
<div class="a" style="left:1115.50px;top:271.56px;width:400px;font-size:18px;line-height:22px;color:#ffffff;font-weight:400;text-align:left;">0</div>
<svg class="a" style="left:1110.0px;top:294.6px;" width="72.0" height="1.4" viewBox="0 0 72.0 1.4"><rect x="0" y="0" width="72.0" height="1.4" fill="#4a63ff"/></svg>
<div class="a" style="left:1110.50px;top:301.84px;width:400px;font-size:12px;line-height:14px;color:#d0d0d6;font-weight:400;text-align:left;">Volts</div>
<svg class="a" style="left:1171px;top:305.5px;" width="12" height="8" viewBox="0 0 12 8"><path d="M1 1.2 L6 6 L11 1.2" fill="none" stroke="#b0b0b8" stroke-width="1.5"/></svg>
<div class="a" style="left:867px;top:335px;width:30px;height:30px;background:#1c1c21;border-radius:4px 4px 0 0;"></div>
<div class="a" style="left:867px;top:369px;width:30px;height:29px;background:#1c1c21;border-radius:0 0 4px 4px;"></div>
<div class="a" style="left:877px;top:349px;width:10px;height:2px;background:#8c8c92;"></div>
<div class="a" style="left:881px;top:345px;width:2px;height:10px;background:#8c8c92;"></div>
<div class="a" style="left:877px;top:382px;width:9px;height:2px;background:#8c8c92;"></div>
<div class="a" style="left:912.50px;top:332.33px;width:400px;font-size:15.5px;line-height:19px;color:#8b8b93;font-weight:400;text-align:left;">Frequency</div>
<svg class="a" style="left:916.5px;top:357.7px;" width="9" height="15.3" viewBox="0 0 9 15.3"><rect x="3.8" y="1" width="2.2" height="13.3" fill="#ffffff"/><path d="M1.2 5.1 L5.2 1.8" stroke="#ffffff" stroke-width="1.8"/></svg>
<svg class="a" style="left:912.0px;top:376.6px;" width="73.0" height="1.4" viewBox="0 0 73.0 1.4"><rect x="0" y="0" width="73.0" height="1.4" fill="#4a63ff"/></svg>
<div class="a" style="left:912.50px;top:383.84px;width:400px;font-size:12px;line-height:14px;color:#d0d0d6;font-weight:400;text-align:left;">kHz</div>
<svg class="a" style="left:974px;top:387.5px;" width="12" height="8" viewBox="0 0 12 8"><path d="M1 1.2 L6 6 L11 1.2" fill="none" stroke="#b0b0b8" stroke-width="1.5"/></svg>
<div class="a" style="left:1065px;top:335px;width:30px;height:30px;background:#1c1c21;border-radius:4px 4px 0 0;"></div>
<div class="a" style="left:1065px;top:369px;width:30px;height:29px;background:#1c1c21;border-radius:0 0 4px 4px;"></div>
<div class="a" style="left:1075px;top:349px;width:10px;height:2px;background:#8c8c92;"></div>
<div class="a" style="left:1079px;top:345px;width:2px;height:10px;background:#8c8c92;"></div>
<div class="a" style="left:1075px;top:382px;width:9px;height:2px;background:#8c8c92;"></div>
<div class="a" style="left:1110.50px;top:332.33px;width:400px;font-size:15.5px;line-height:19px;color:#8b8b93;font-weight:400;text-align:left;">Phase</div>
<div class="a" style="left:1115.50px;top:354.56px;width:400px;font-size:18px;line-height:22px;color:#ffffff;font-weight:400;text-align:left;">0</div>
<svg class="a" style="left:1110.0px;top:376.6px;" width="72.0" height="1.4" viewBox="0 0 72.0 1.4"><rect x="0" y="0" width="72.0" height="1.4" fill="#4a63ff"/></svg>
<div class="a" style="left:1110.50px;top:383.84px;width:400px;font-size:12px;line-height:14px;color:#d0d0d6;font-weight:400;text-align:left;">deg</div>
<svg class="a" style="left:1171px;top:387.5px;" width="12" height="8" viewBox="0 0 12 8"><path d="M1 1.2 L6 6 L11 1.2" fill="none" stroke="#b0b0b8" stroke-width="1.5"/></svg>
<svg class="a" style="left:867px;top:405px;" width="12" height="14" viewBox="0 0 12 14"><path d="M2.8 1.4 L9.2 6.8 L2.8 12.6" fill="none" stroke="#a8a8b0" stroke-width="1.9"/></svg>
<div class="a" style="left:889.60px;top:406.14px;width:400px;font-size:12px;line-height:14px;color:#6f6f78;font-weight:400;text-align:left;letter-spacing:-0.6px;">NOISE</div>
<div class="a" style="left:937px;top:412px;width:310px;height:1px;background:#8f8f95;"></div>
<div class="a" style="left:867.00px;top:435.78px;width:400px;font-size:14.5px;line-height:17px;color:#dedee2;font-weight:400;text-align:left;">None</div>
<div class="a" style="left:867px;top:459px;width:380px;height:1px;background:#9a9aa0;"></div>
<svg class="a" style="left:1236px;top:440px;" width="12" height="8" viewBox="0 0 12 8"><path d="M1 1.2 L6 6 L11 1.2" fill="none" stroke="#b0b0b8" stroke-width="1.5"/></svg>
<div class="a" style="left:1058px;top:468px;width:30px;height:30px;background:#1c1c21;border-radius:4px 4px 0 0;"></div>
<div class="a" style="left:1058px;top:502px;width:30px;height:30px;background:#1c1c21;border-radius:0 0 4px 4px;"></div>
<div class="a" style="left:1068px;top:482px;width:10px;height:2px;background:#8c8c92;"></div>
<div class="a" style="left:1072px;top:478px;width:2px;height:10px;background:#8c8c92;"></div>
<div class="a" style="left:1067px;top:516px;width:10px;height:2px;background:#8c8c92;"></div>
<div class="a" style="left:1103.00px;top:466.13px;width:400px;font-size:15.5px;line-height:19px;color:#8b8b93;font-weight:400;text-align:left;">Amplitude</div>
<svg class="a" style="left:1107.2px;top:490.5px;" width="9" height="15.3" viewBox="0 0 9 15.3"><rect x="3.8" y="1" width="2.2" height="13.3" fill="#ffffff"/><path d="M1.2 5.1 L5.2 1.8" stroke="#ffffff" stroke-width="1.8"/></svg>
<svg class="a" style="left:1102.5px;top:510.6px;" width="79.5" height="1.4" viewBox="0 0 79.5 1.4"><rect x="0" y="0" width="79.5" height="1.4" fill="#4a63ff"/></svg>
<div class="a" style="left:1103.00px;top:519.14px;width:400px;font-size:12px;line-height:14px;color:#d0d0d6;font-weight:400;text-align:left;">μVolts</div>
<svg class="a" style="left:1171px;top:519px;" width="12" height="8" viewBox="0 0 12 8"><path d="M1 1.2 L6 6 L11 1.2" fill="none" stroke="#b0b0b8" stroke-width="1.5"/></svg>
<svg class="a" style="left:867px;top:535px;" width="12" height="14" viewBox="0 0 12 14"><path d="M2.8 1.4 L9.2 6.8 L2.8 12.6" fill="none" stroke="#a8a8b0" stroke-width="1.9"/></svg>
<div class="a" style="left:889.20px;top:536.14px;width:400px;font-size:12px;line-height:14px;color:#6f6f78;font-weight:400;text-align:left;letter-spacing:-0.6px;">OTHER</div>
<div class="a" style="left:938px;top:542px;width:309px;height:1px;background:#8f8f95;"></div>
<div class="a" style="left:867.00px;top:568.69px;width:400px;font-size:13.3px;line-height:16px;color:#c9cad0;font-weight:400;text-align:left;">Load (Ohm)</div>
<div class="a" style="left:1096.90px;top:566.11px;width:400px;font-size:17px;line-height:20px;color:#ffffff;font-weight:400;text-align:left;">inf</div>
<div class="a" style="left:1093px;top:589px;width:154px;height:1px;background:#9a9aa0;"></div>
<div class="a" style="left:867.00px;top:607.63px;width:400px;font-size:13.2px;line-height:16px;color:#c9cad0;font-weight:400;text-align:left;">Line thickness</div>
<svg class="a" style="left:1057.3px;top:607.6px;" width="9" height="11.6" viewBox="0 0 9 11.6"><rect x="3.8" y="1" width="1.5" height="9.6" fill="#c9cad0"/><path d="M2 3.9 L5.2 1.8" stroke="#c9cad0" stroke-width="1.3"/></svg>
<div class="a" style="left:1057px;top:628px;width:190px;height:1px;background:#9a9aa0;"></div>
<svg class="a" style="left:1236px;top:610px;" width="12" height="8" viewBox="0 0 12 8"><path d="M1 1.2 L6 6 L11 1.2" fill="none" stroke="#b0b0b8" stroke-width="1.5"/></svg>
<div class="a" style="left:1147px;top:639px;width:50px;height:8px;background:#000;border-radius:4px 0 0 0;"></div>
<div class="a" style="left:1197px;top:639px;width:50px;height:8px;background:#4a63ff;border-radius:0 4px 0 0;"></div>
<div class="a" style="left:215px;top:687px;width:1065px;height:63px;background:#23232a;"></div>
<div class="a" style="left:227px;top:709px;width:18px;height:18px;border-radius:50%;background:#ff7300"></div>
<div class="a" style="left:257.30px;top:708.74px;width:400px;font-size:14.6px;line-height:18px;color:#aeafb7;font-weight:700;text-align:left;">CH 1</div>
<div class="a" style="left:304px;top:708px;width:40px;height:20px;background:#4a63ff;border-radius:10px;"></div>
<svg class="a" style="left:316px;top:710px;" width="16" height="16" viewBox="0 0 16 16"><g stroke="#fff" stroke-width="2"><path d="M2 5 H14 M2 11 H14"/></g><circle cx="11" cy="5" r="1.7" fill="#3a52f0" stroke="#fff" stroke-width="1.3"/><circle cx="5" cy="11" r="1.7" fill="#3a52f0" stroke="#fff" stroke-width="1.3"/></svg>
<div class="a" style="left:368px;top:709px;width:18px;height:18px;border-radius:50%;background:#8a14f0"></div>
<div class="a" style="left:398.70px;top:708.74px;width:400px;font-size:14.6px;line-height:18px;color:#aeafb7;font-weight:700;text-align:left;">CH 2</div>
<div class="a" style="left:445px;top:708px;width:40px;height:20px;background:#1d1d22;border-radius:10px;"></div>
<svg class="a" style="left:457px;top:710px;" width="16" height="16" viewBox="0 0 16 16"><g stroke="#a0a0a6" stroke-width="2"><path d="M2 5 H14 M2 11 H14"/></g><circle cx="11" cy="5" r="1.7" fill="#1d1d22" stroke="#a0a0a6" stroke-width="1.3"/><circle cx="5" cy="11" r="1.7" fill="#1d1d22" stroke="#a0a0a6" stroke-width="1.3"/></svg>
<div class="a" style="left:215px;top:748px;width:141px;height:2px;background:#ff7200;"></div>
<svg class="a" style="left:0px;top:0px;" width="10" height="10" viewBox="0 0 10 10"><rect x="0" y="0" width="10" height="10" fill="#f3f3f3"/><path d="M0.5 6.5 A6 6 0 0 1 6.5 0.5 H10" fill="none" stroke="#b9b9b9" stroke-width="1"/></svg>
<svg class="a" style="left:1270px;top:0px;" width="10" height="10" viewBox="0 0 10 10"><rect x="0" y="0" width="10" height="10" fill="#f3f3f3"/><path d="M0 0.5 H3.5 A6 6 0 0 1 9.5 6.5" fill="none" stroke="#b9b9b9" stroke-width="1"/></svg>
<svg class="a" style="left:0px;top:742px;" width="8" height="8" viewBox="0 0 8 8"><path d="M0 0 A8 8 0 0 0 8 8 L0 8 Z" fill="#cdcdcd"/></svg>
<svg class="a" style="left:1273px;top:743px;" width="7" height="7" viewBox="0 0 7 7"><path d="M7 0 A7 7 0 0 1 0 7 L7 7 Z" fill="#cdcdcd"/></svg>
</body></html>
